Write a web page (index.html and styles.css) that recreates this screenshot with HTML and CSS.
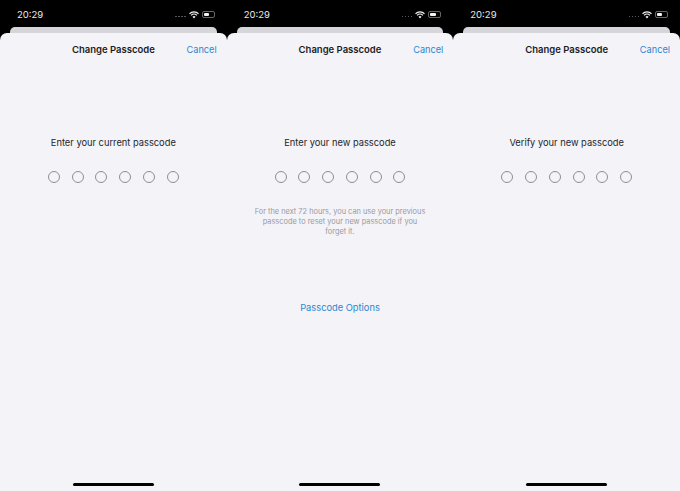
FILE: index.html
```html
<!DOCTYPE html>
<html lang="en">
<head>
  <meta charset="UTF-8" />
  <title>Change Passcode</title>
  <link rel="stylesheet" href="styles.css">
</head>
<body>
  <div class="phones">

    <div class="phone">
      <div class="status-bar">
        <span class="time">20:29</span>
        <div class="status-icons">
          <span class="signal"><i></i><i></i><i></i><i></i></span>
          <svg class="wifi" viewBox="0 0 16 12"><path d="M8 11.5 5.6 8.9a3.4 3.4 0 0 1 4.8 0zM3.900 7.100a5.800 5.800 0 0 1 8.200 0l1.200-1.300a7.600 7.600 0 0 0-10.600 0zM1.500 4.600a9.200 9.200 0 0 1 13 0l1.300-1.300a11 11 0 0 0-15.600 0z"/></svg>
          <span class="battery"><span class="battery-level"></span></span>
        </div>
      </div>
      <div class="peek"></div>
      <div class="sheet">
        <div class="nav">
          <span class="nav-title">Change Passcode</span>
          <span class="nav-cancel">Cancel</span>
        </div>
        <p class="prompt">Enter your current passcode</p>
        <div class="dots"><i></i><i></i><i></i><i></i><i></i><i></i></div>
        <div class="home-bar"></div>
      </div>
    </div>

    <div class="phone">
      <div class="status-bar">
        <span class="time">20:29</span>
        <div class="status-icons">
          <span class="signal"><i></i><i></i><i></i><i></i></span>
          <svg class="wifi" viewBox="0 0 16 12"><path d="M8 11.5 5.6 8.9a3.4 3.4 0 0 1 4.8 0zM3.900 7.100a5.800 5.800 0 0 1 8.200 0l1.200-1.300a7.600 7.600 0 0 0-10.600 0zM1.500 4.600a9.200 9.200 0 0 1 13 0l1.300-1.300a11 11 0 0 0-15.600 0z"/></svg>
          <span class="battery"><span class="battery-level"></span></span>
        </div>
      </div>
      <div class="peek"></div>
      <div class="sheet">
        <div class="nav">
          <span class="nav-title">Change Passcode</span>
          <span class="nav-cancel">Cancel</span>
        </div>
        <p class="prompt">Enter your new passcode</p>
        <div class="dots"><i></i><i></i><i></i><i></i><i></i><i></i></div>
        <p class="hint">For the next 72 hours, you can use your previous passcode to reset your new passcode if you forget it.</p>
        <p class="options">Passcode Options</p>
        <div class="home-bar"></div>
      </div>
    </div>

    <div class="phone">
      <div class="status-bar">
        <span class="time">20:29</span>
        <div class="status-icons">
          <span class="signal"><i></i><i></i><i></i><i></i></span>
          <svg class="wifi" viewBox="0 0 16 12"><path d="M8 11.5 5.6 8.9a3.4 3.4 0 0 1 4.8 0zM3.900 7.100a5.800 5.800 0 0 1 8.200 0l1.200-1.300a7.600 7.600 0 0 0-10.600 0zM1.500 4.600a9.200 9.200 0 0 1 13 0l1.300-1.300a11 11 0 0 0-15.600 0z"/></svg>
          <span class="battery"><span class="battery-level"></span></span>
        </div>
      </div>
      <div class="peek"></div>
      <div class="sheet">
        <div class="nav">
          <span class="nav-title">Change Passcode</span>
          <span class="nav-cancel">Cancel</span>
        </div>
        <p class="prompt">Verify your new passcode</p>
        <div class="dots"><i></i><i></i><i></i><i></i><i></i><i></i></div>
        <div class="home-bar"></div>
      </div>
    </div>

  </div>
</body>
</html>
```

FILE: styles.css
```css
:root {
  --fundo: #f3f3f8;
  --azul: #2f86cf;
  --texto: #26262a;
}

html,
body {
  margin: 0;
  height: 100%;
  background: #000;
  font-family: Inter, "Liberation Sans", sans-serif;
}

.phones {
  display: grid;
  grid-template-columns: repeat(3, 1fr);
  height: 491px;
  overflow: hidden;
}

.phone {
  display: flex;
  flex-direction: column;
  min-width: 0;
}

.status-bar {
  display: flex;
  align-items: center;
  justify-content: space-between;
  height: 27px;
  padding: 2px 12px 0 17px;
  box-sizing: border-box;
  color: #e8e8e8;
  font-size: 9.500px;
  font-weight: 400;
}

.status-icons {
  display: flex;
  align-items: center;
  gap: 3px;
}

.signal {
  display: flex;
  gap: 1.500px;
  margin-top: 4px;
}

.signal i {
  width: 1.500px;
  height: 1.500px;
  background: #555;
}

.wifi {
  width: 10px;
  height: 8px;
  fill: #f4f4f4;
}

.battery {
  display: block;
  width: 13px;
  height: 7px;
  padding: 1px;
  border: 0.500px solid #666;
  border-radius: 2px;
  box-sizing: border-box;
}

.battery-level {
  display: block;
  width: 60%;
  height: 100%;
  background: #f4f4f4;
  border-radius: 1px;
}

.peek {
  height: 6px;
  margin: 0 10px;
  background: #d6d6da;
  border-radius: 5px 5px 0 0;
}

.sheet {
  display: flex;
  flex-direction: column;
  align-items: center;
  flex: 1;
  background: var(--fundo);
  border-radius: 7px 7px 0 0;
}

.nav {
  display: flex;
  align-items: center;
  justify-content: center;
  position: relative;
  width: 100%;
  height: 32px;
}

.nav-title {
  color: #1c1c1f;
  font-size: 9.500px;
  font-weight: 600;
}

.nav-cancel {
  position: absolute;
  right: 10px;
  color: var(--azul);
  font-size: 9.200px;
}

.prompt {
  margin: 71px 0 0;
  color: var(--texto);
  font-size: 9.300px;
  line-height: 14px;
}

.dots {
  display: flex;
  gap: 11.800px;
  margin-top: 21px;
}

.dots i {
  width: 12px;
  height: 12px;
  border: 1px solid #8e8e93;
  border-radius: 50%;
  box-sizing: border-box;
}

.hint {
  width: 174px;
  margin: 24px 0 0;
  color: #9a9aa0;
  font-size: 7.400px;
  line-height: 10px;
  text-align: center;
}

.options {
  margin: 64px 0 0;
  color: var(--azul);
  font-size: 9.300px;
  line-height: 14px;
}

.home-bar {
  width: 81px;
  height: 3px;
  margin-top: auto;
  margin-bottom: 5px;
  background: #000;
  border-radius: 2px;
}
```
